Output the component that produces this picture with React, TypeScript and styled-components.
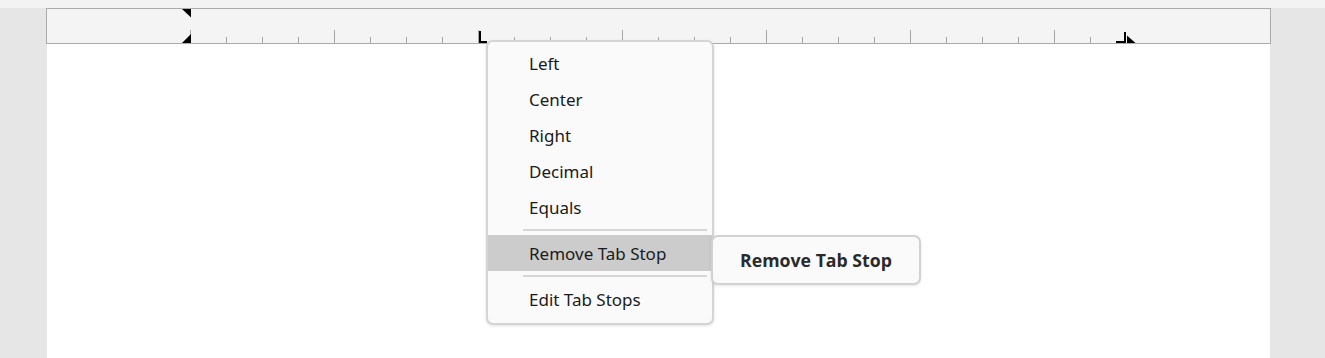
import React from "react";
import styled, { createGlobalStyle } from "styled-components";

const Global = createGlobalStyle`
  html, body { margin: 0; padding: 0; }
  body {
    background: #e6e6e6;
    width: 1325px;
    height: 358px;
    overflow: hidden;
    font-family: "Noto Sans", "Open Sans", sans-serif;
  }
`;

const Screen = styled.div`
  display: flex;
  flex-direction: column;
  width: 1325px;
  height: 358px;
`;

const TopStrip = styled.div`
  height: 8px;
  background: #f3f3f3;
  flex: none;
`;

const Workspace = styled.div`
  flex: 1;
  display: flex;
  padding-left: 46px;
`;

const Column = styled.div`
  position: relative;
  width: 1225px;
  display: flex;
  flex-direction: column;
`;

const Ruler = styled.div`
  height: 34px;
  border: 1px solid #ababab;
  background: #f4f4f4;
  display: flex;
`;

const Page = styled.div`
  flex: 1;
  margin: 0 1px;
  background: #ffffff;
`;

const Menu = styled.div`
  position: absolute;
  left: 440px;
  top: 32px;
  width: 224px;
  padding: 3px 0 6px;
  background: #fafafa;
  border: 2px solid #d4d4d4;
  border-radius: 7px;
  box-shadow: 0 1px 3px rgba(0, 0, 0, 0.12);
  display: flex;
  flex-direction: column;
`;

const Item = styled.div<{ $active?: boolean }>`
  height: 36px;
  display: flex;
  align-items: center;
  padding-left: 41px;
  font-size: 17px;
  color: #1b1b1b;
  background: ${(p) => (p.$active ? "#cccccc" : "transparent")};
`;

const Separator = styled.div`
  height: 10px;
  display: flex;
  align-items: center;
  padding: 0 5px 0 35px;
  &::after {
    content: "";
    flex: 1;
    height: 2px;
    background: #d6d6d6;
  }
`;

const Tooltip = styled.div`
  position: absolute;
  left: 665px;
  top: 227px;
  width: 206px;
  height: 46px;
  background: #fafafa;
  border: 2px solid #d2d2d2;
  border-radius: 7px;
  box-shadow: 0 1px 3px rgba(0, 0, 0, 0.1);
  display: flex;
  align-items: center;
  justify-content: center;
  font-family: "Open Sans", sans-serif;
  font-weight: 700;
  font-size: 17.7px;
  color: #2a2a2a;
`;

const OX = 47;
const OY = 9;

function RulerScale() {
  const ticks = [];
  for (let k = 0; k <= 25; k++) {
    const x = 190 + 36 * k - OX;
    const major = k % 4 === 0;
    ticks.push(
      <rect
        key={k}
        x={x}
        y={major ? 30 - OY : 37 - OY}
        width={1}
        height={major ? 13 : 6}
        fill="#a6a6a6"
      />
    );
  }
  const p = (x: number, y: number) => `${x - OX},${y - OY}`;
  return (
    <svg width="1223" height="34" viewBox="0 0 1223 34">
      {ticks}
      <polygon points={`${p(182, 9)} ${p(191, 9)} ${p(191, 17.5)}`} fill="#000" />
      <polygon points={`${p(182, 43)} ${p(191, 43)} ${p(191, 34)}`} fill="#000" />
      <rect x={479 - OX} y={31 - OY} width={2} height={12} fill="#000" />
      <rect x={479 - OX} y={41 - OY} width={8} height={2} fill="#000" />
      <rect x={1116 - OX} y={41 - OY} width={9} height={2} fill="#000" />
      <rect x={1124 - OX} y={32 - OY} width={2} height={11} fill="#000" />
      <polygon points={`${p(1127, 35.5)} ${p(1127, 43)} ${p(1135.5, 43)}`} fill="#000" />
    </svg>
  );
}

export default function App() {
  return (
    <>
      <Global />
      <Screen>
        <TopStrip />
        <Workspace>
          <Column>
            <Ruler>
              <RulerScale />
            </Ruler>
            <Page />
            <Menu>
              <Item>Left</Item>
              <Item>Center</Item>
              <Item>Right</Item>
              <Item>Decimal</Item>
              <Item>Equals</Item>
              <Separator />
              <Item $active>Remove Tab Stop</Item>
              <Separator />
              <Item>Edit Tab Stops</Item>
            </Menu>
            <Tooltip>Remove Tab Stop</Tooltip>
          </Column>
        </Workspace>
      </Screen>
    </>
  );
}
